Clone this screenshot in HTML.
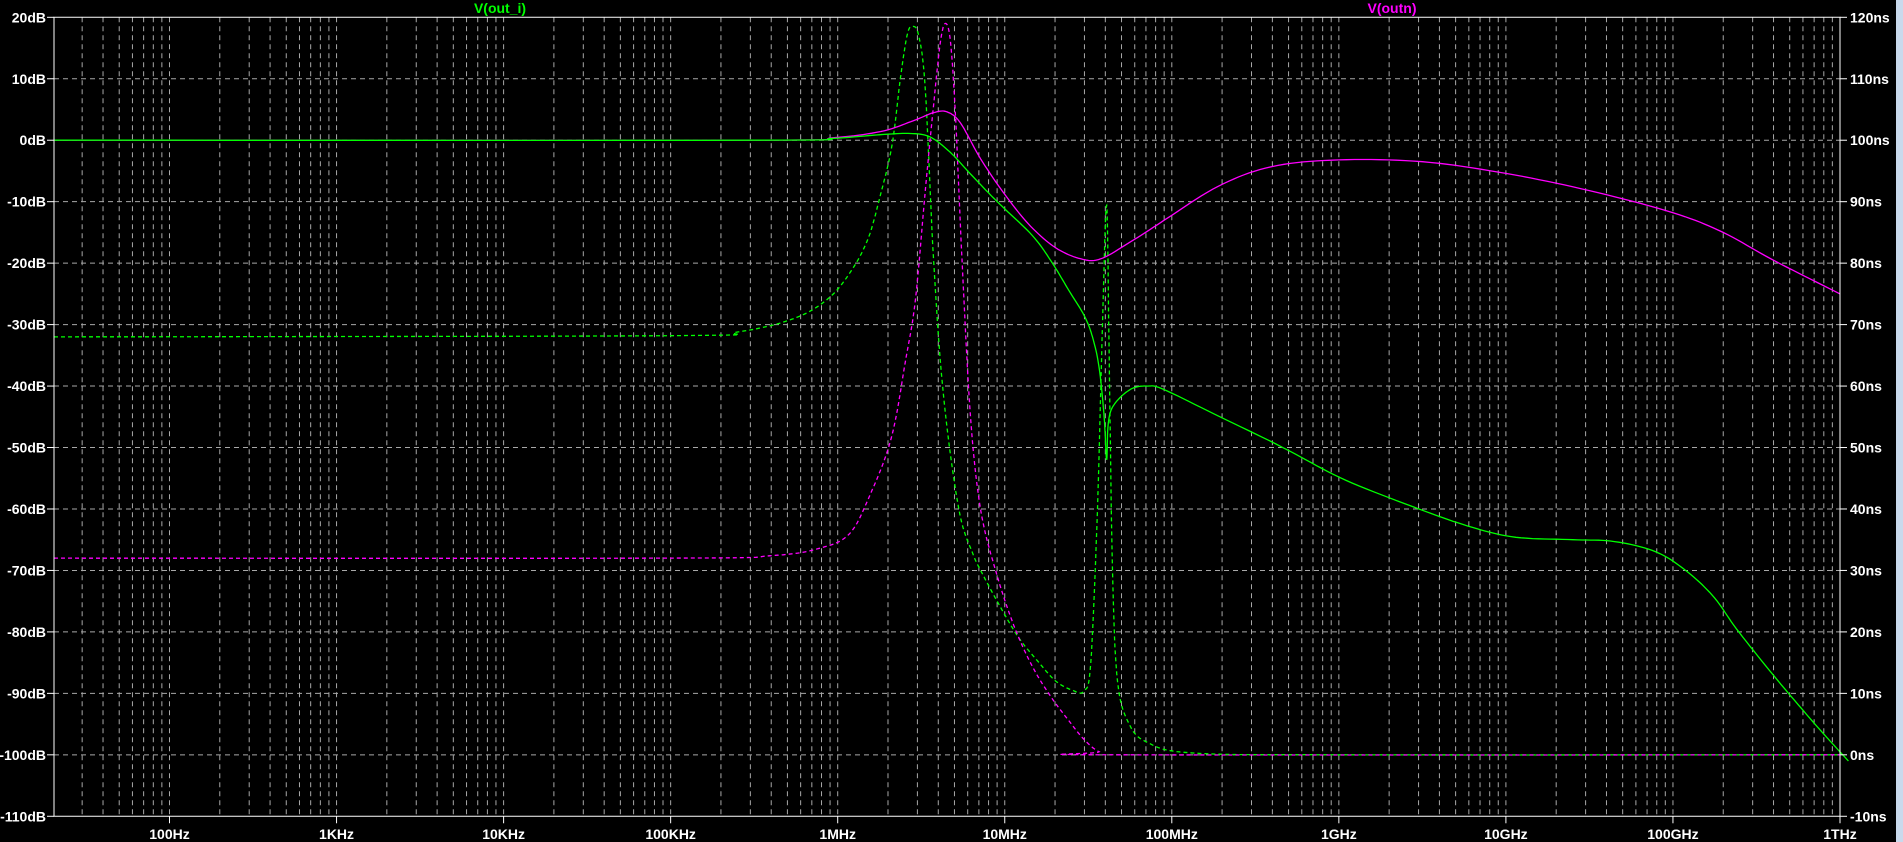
<!DOCTYPE html>
<html><head><meta charset="utf-8"><style>
html,body{margin:0;padding:0;background:#000;width:1903px;height:842px;overflow:hidden}
svg{display:block}
text{font-family:"Liberation Sans",sans-serif;font-weight:bold;font-size:14px}
</style></head><body>
<svg id="s" width="1903" height="842" viewBox="0 0 1903 842" xmlns="http://www.w3.org/2000/svg">
<rect x="0" y="0" width="1903" height="842" fill="#000"/>
<rect x="1896" y="0" width="7" height="842" fill="#c9d9ec"/>
<g id="grid"></g>
<g id="curves" fill="none" stroke-width="1.3"></g>
<g id="axes"></g>
<text x="500" y="13" fill="#00ff00" text-anchor="middle">V(out_i)</text>
<text x="1392" y="13" fill="#ff00ff" text-anchor="middle">V(outn)</text>
</svg>
<script>
var NS="http://www.w3.org/2000/svg";
function X(lf){return 1840-(12-lf)*167.05;}
function Y(db){return 17.3+(20-db)*6.146;}
var L=54,R=1840,T=Y(20),B=Y(-110);
var g=document.getElementById('grid'),a=document.getElementById('axes'),c=document.getElementById('curves');
function el(p,tag,at,txt){var e=document.createElementNS(NS,tag);for(var k in at)e.setAttribute(k,at[k]);if(txt)e.textContent=txt;p.appendChild(e);return e;}
for(var d=20;d>=-110;d-=10){var y=Y(d);
 if(d<20&&d>-110)el(g,'line',{x1:L,x2:R,y1:y,y2:y,stroke:'#a8a8a8','stroke-dasharray':'5,4'});
 el(a,'line',{x1:47,x2:L,y1:y,y2:y,stroke:'#fff'});
 el(a,'line',{x1:R,x2:R+7,y1:y,y2:y,stroke:'#fff'});
 el(a,'text',{x:46,y:y+5,fill:'#fff','text-anchor':'end'},d+'dB');
 el(a,'text',{x:R+10,y:y+5,fill:'#fff'},(d+100)+'ns');
}
var labs={2:'100Hz',3:'1KHz',4:'10KHz',5:'100KHz',6:'1MHz',7:'10MHz',8:'100MHz',9:'1GHz',10:'10GHz',11:'100GHz',12:'1THz'};
for(var dec=1;dec<=12;dec++){for(var m=1;m<=9;m++){var lf=dec+Math.log10(m);if(lf>12.001)break;var x=X(lf);if(x<=L+1)continue;
 if(x<R-1)el(g,'line',{x1:x,x2:x,y1:T,y2:B,stroke:'#a8a8a8','stroke-dasharray':'5,4'});
 if(m==1&&labs[dec]){el(a,'line',{x1:x,x2:x,y1:B,y2:B+7,stroke:'#fff'});el(a,'text',{x:x,y:839,fill:'#fff','text-anchor':'middle'},labs[dec]);}
}}
el(a,'path',{d:'M'+L+' '+T+'H'+R+'V'+B+'H'+L+'Z',stroke:'#fff',fill:'none'});
function sh(lf){if(lf<5.6||lf>8.6)return lf;var w=lf<6.2?(lf-5.6)/0.6:(lf>8?(8.6-lf)/0.6:1);return lf-0.045*w;}
function curve(pts,col,dash){var s='';for(var i=0;i<pts.length;i++){s+=(i?'L':'M')+X(sh(pts[i][0])).toFixed(1)+' '+Y(pts[i][1]).toFixed(1);}
 var at={d:s,stroke:col};if(dash)at['stroke-dasharray']='4,3';el(c,'path',at);}
function smooth(pts){var o=[];for(var i=0;i<pts.length-1;i++){var p0=pts[Math.max(0,i-1)],p1=pts[i],p2=pts[i+1],p3=pts[Math.min(pts.length-1,i+2)];
 for(var t=0;t<1;t+=0.1){var t2=t*t,t3=t2*t;
 var f=function(k){return 0.5*((2*p1[k])+(-p0[k]+p2[k])*t+(2*p0[k]-5*p1[k]+4*p2[k]-p3[k])*t2+(-p0[k]+3*p1[k]-3*p2[k]+p3[k])*t3);};
 o.push([f(0),f(1)]);}}o.push(pts[pts.length-1]);return o;}
var L0=(L-1840)/167.05+12;
curve(smooth([[L0,-32],[5,-31.8],[5.4,-31.2],[5.75,-29],[5.96,-26],[6.1,-22],[6.22,-16.5],[6.3,-9],[6.37,-0.8],[6.42,10],[6.46,17],[6.49,18.5],[6.53,17],[6.57,8],[6.62,-20],[6.68,-42],[6.77,-60],[6.85,-67],[6.92,-71],[7.02,-76],[7.13,-81],[7.25,-85],[7.35,-88],[7.45,-89.5],[7.52,-89.6],[7.56,-85],[7.6,-60],[7.63,-30],[7.655,-10.6],[7.67,-35],[7.69,-70],[7.72,-88],[7.79,-95],[7.9,-98],[8.16,-99.7],[9,-100],[12,-100]]),'#00ff00',true);
curve(smooth([[L0,-68],[5,-68],[5.6,-67.6],[5.9,-66.5],[6.11,-64],[6.25,-57],[6.37,-48],[6.45,-36],[6.51,-26],[6.57,-8],[6.62,6],[6.66,16],[6.69,19],[6.72,16],[6.75,4],[6.79,-20],[6.84,-45],[6.9,-60],[6.99,-70],[7.1,-79],[7.21,-85.6],[7.32,-90.5],[7.43,-94.5],[7.52,-97.5],[7.61,-99.5],[7.72,-100],[12,-100]]),'#ff00ff',true);
curve(smooth([[L0,0],[5.5,0],[6,0.4],[6.3,1.4],[6.5,3.2],[6.62,4.5],[6.7,4.6],[6.78,2.8],[6.9,-3],[7.05,-9],[7.2,-14],[7.35,-17.5],[7.5,-19.3],[7.62,-19.3],[7.8,-16.5],[8,-13],[8.3,-7.5],[8.6,-4.3],[9,-3.2],[9.5,-3.5],[10,-5.4],[10.5,-8.2],[11,-11.8],[11.3,-15],[11.6,-19.5],[12,-25]]),'#ff00ff',false);
curve(smooth([[L0,0],[5.5,0],[6,0.3],[6.3,0.9],[6.48,1.1],[6.6,0.5],[6.72,-2],[6.84,-5.5],[7.0,-10],[7.21,-15.5],[7.33,-20],[7.43,-24.5],[7.52,-28.5],[7.57,-32],[7.61,-37],[7.64,-45],[7.655,-52],[7.665,-46],[7.7,-43],[7.8,-40.5],[7.9,-40],[8.0,-40.6],[8.31,-45],[8.7,-50.5],[9.04,-55.3],[9.48,-60],[9.8,-63],[10.06,-64.6],[10.4,-65],[10.65,-65.3],[10.9,-67],[11.09,-70.3],[11.25,-74.5],[11.38,-79.5],[11.6,-87],[11.85,-95],[12.05,-101]]),'#00ff00',false);
</script>
</body></html>
